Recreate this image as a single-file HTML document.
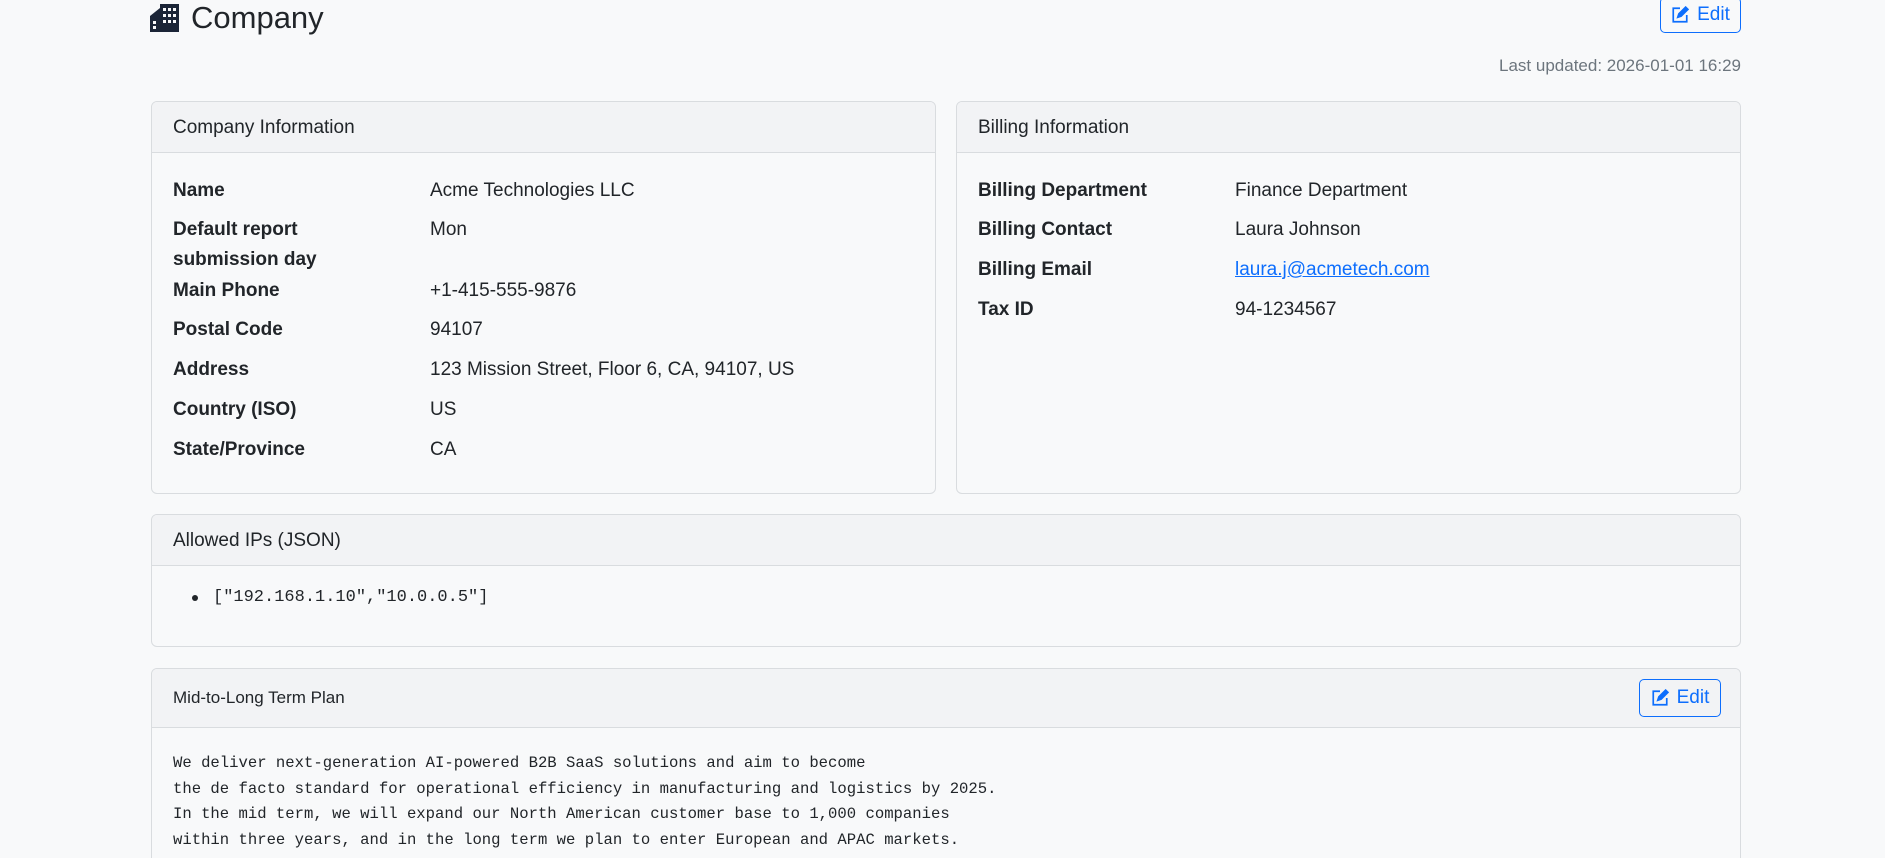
<!DOCTYPE html>
<html><head><meta charset="utf-8"><style>
*{box-sizing:border-box;margin:0;padding:0}
html,body{width:1885px;height:858px;overflow:hidden}
body{background:#f8f9fa;font-family:"Liberation Sans",sans-serif;color:#212529;position:relative}
#wrap{position:absolute;left:0;top:0;width:1885px;height:858px;overflow:hidden}
.abs{position:absolute}
.card{position:absolute;border:1px solid #d9dcdf;border-radius:6px;background:#f8f9fa;overflow:hidden}
.ch{background:#f2f3f5;border-bottom:1px solid #d9dcdf;height:51px;padding:0 21px;line-height:51px;font-size:19px}
.row{position:absolute;font-size:19px;line-height:30px}
.lb{font-weight:bold}
.btn{position:absolute;border:1px solid #0d6efd;border-radius:5px;color:#0d6efd;font-size:19px;display:flex;align-items:center;justify-content:center;gap:8px}
.mono{font-family:"Liberation Mono",monospace}
</style></head><body><div id="wrap">
<svg class="abs" style="left:150px;top:4px" width="30" height="28" viewBox="0 0 30 28"><rect x="10" y="0" width="19" height="28" fill="#1b2537"/><rect x="0" y="12" width="12" height="16" fill="#1b2537"/><polygon points="0,12 10,4 10,12" fill="#1b2537"/>
<g fill="#f8f9fa"><rect x="13" y="4" width="3" height="3"/><rect x="18" y="4" width="3" height="3"/><rect x="23" y="4" width="3" height="3"/><rect x="13" y="10" width="3" height="3"/><rect x="18" y="10" width="3" height="3"/><rect x="23" y="10" width="3" height="3"/><rect x="13" y="16" width="3" height="3"/><rect x="18" y="16" width="3" height="3"/><rect x="23" y="16" width="3" height="3"/><rect x="3" y="17" width="3" height="3"/><rect x="3" y="22" width="3" height="3"/></g></svg>
<div class="abs" style="left:191px;top:-2px;font-size:31px;line-height:40px">Company</div>
<div class="btn" style="left:1660px;top:-3px;width:81px;height:36px"><svg width="18" height="18" viewBox="0 0 16 16" fill="none" stroke="#0d6efd" stroke-width="1.5"><path d="M8 2H2v12h12V8"/><path d="M6 10l1-3 6-6 2 2-6 6z" fill="#0d6efd"/></svg>Edit</div>
<div class="abs" style="right:144px;top:56px;font-size:17px;color:#6c757d">Last updated: 2026-01-01 16:29</div>

<div class="card" style="left:151px;top:101px;width:785px;height:393px"><div class="ch">Company Information</div>
<div class="row lb" style="left:21px;top:74px">Name</div><div class="row" style="left:278px;top:74px">Acme Technologies LLC</div>
<div class="row lb" style="left:21px;top:113px">Default report<br>submission day</div><div class="row" style="left:278px;top:113px">Mon</div>
<div class="row lb" style="left:21px;top:174px">Main Phone</div><div class="row" style="left:278px;top:174px">+1-415-555-9876</div>
<div class="row lb" style="left:21px;top:213px">Postal Code</div><div class="row" style="left:278px;top:213px">94107</div>
<div class="row lb" style="left:21px;top:253px">Address</div><div class="row" style="left:278px;top:253px">123 Mission Street, Floor 6, CA, 94107, US</div>
<div class="row lb" style="left:21px;top:293px">Country (ISO)</div><div class="row" style="left:278px;top:293px">US</div>
<div class="row lb" style="left:21px;top:333px">State/Province</div><div class="row" style="left:278px;top:333px">CA</div>
</div>

<div class="card" style="left:956px;top:101px;width:785px;height:393px"><div class="ch">Billing Information</div>
<div class="row lb" style="left:21px;top:74px">Billing Department</div><div class="row" style="left:278px;top:74px">Finance Department</div>
<div class="row lb" style="left:21px;top:113px">Billing Contact</div><div class="row" style="left:278px;top:113px">Laura Johnson</div>
<div class="row lb" style="left:21px;top:153px">Billing Email</div><div class="row" style="left:278px;top:153px;color:#0d6efd;text-decoration:underline">laura.j@acmetech.com</div>
<div class="row lb" style="left:21px;top:193px">Tax ID</div><div class="row" style="left:278px;top:193px">94-1234567</div>
</div>

<div class="card" style="left:151px;top:514px;width:1590px;height:133px"><div class="ch">Allowed IPs (JSON)</div>
<div class="abs" style="left:40px;top:80px;width:6px;height:6px;border-radius:50%;background:#212529"></div>
<div class="row mono" style="left:61px;top:68px;font-size:17px">["192.168.1.10","10.0.0.5"]</div>
</div>

<div class="card" style="left:151px;top:668px;width:1590px;height:240px"><div class="ch" style="height:59px;line-height:58px;font-size:17px">Mid-to-Long Term Plan</div>
<div class="btn" style="left:1487px;top:10px;width:82px;height:38px"><svg width="18" height="18" viewBox="0 0 16 16" fill="none" stroke="#0d6efd" stroke-width="1.5"><path d="M8 2H2v12h12V8"/><path d="M6 10l1-3 6-6 2 2-6 6z" fill="#0d6efd"/></svg>Edit</div>
<div class="abs mono" style="left:21px;top:82px;font-size:15.6px;line-height:25.5px;white-space:pre">We deliver next-generation AI-powered B2B SaaS solutions and aim to become
the de facto standard for operational efficiency in manufacturing and logistics by 2025.
In the mid term, we will expand our North American customer base to 1,000 companies
within three years, and in the long term we plan to enter European and APAC markets.</div>
</div>
</div></body></html>
